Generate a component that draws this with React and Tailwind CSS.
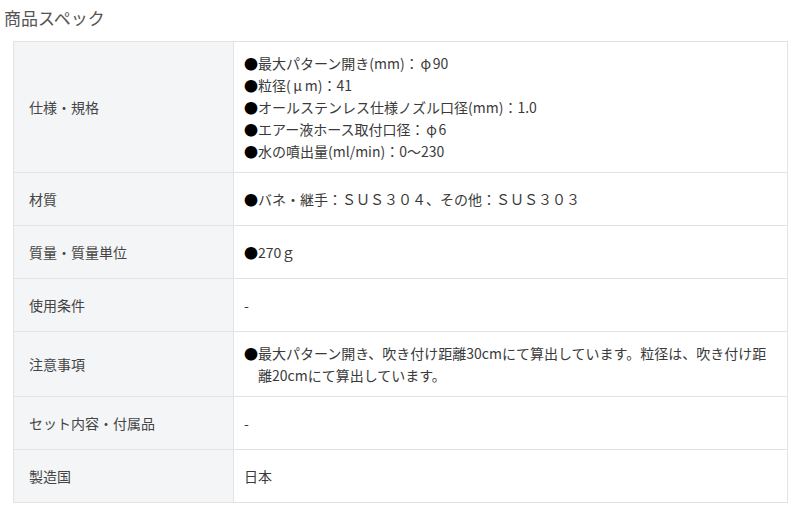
import React from 'react';

const Wide = ({ children }) => (
  <span className="inline-block w-[14px] text-center">{children}</span>
);

const specs = [
  {
    label: '仕様・規格',
    lines: [
      <>最大パターン開き(mm)：<Wide>φ</Wide>90</>,
      <>粒径(<Wide>μ</Wide>m)：41</>,
      'オールステンレス仕様ノズル口径(mm)：1.0',
      <>エアー液ホース取付口径：<Wide>φ</Wide>6</>,
      '水の噴出量(ml/min)：0〜230',
    ],
  },
  { label: '材質', lines: ['バネ・継手：ＳＵＳ３０４、その他：ＳＵＳ３０３'] },
  { label: '質量・質量単位', lines: ['270ｇ'] },
  { label: '使用条件', text: '-' },
  {
    label: '注意事項',
    lines: ['最大パターン開き、吹き付け距離30cmにて算出しています。粒径は、吹き付け距離20cmにて算出しています。'],
  },
  { label: 'セット内容・付属品', text: '-' },
  { label: '製造国', text: '日本' },
];

const App = () => {
  return (
    <div
      className="bg-white w-[790px] h-[505px] overflow-hidden text-[#3a3a3a]"
      style={{ fontFamily: '"Noto Sans CJK JP", "Noto Sans", sans-serif' }}
    >
      <h2 className="pl-[4px] pt-[6px] text-[17px] leading-[24px] text-[#555] font-normal">商品スペック</h2>
      <table className="ml-[13px] mt-[11px] w-[775px] border-collapse table-fixed">
        <tbody>
          {specs.map((row, i) => (
            <tr key={i}>
              <th className="w-[220px] border border-[#e3e3e3] bg-[#f4f5f7] pl-[15px] pr-2 py-[15px] text-left align-middle text-[14px] leading-[22px] font-normal text-[#444]">
                {row.label}
              </th>
              <td className="border border-[#e3e3e3] pl-[10px] pr-[14px] py-[10px] align-middle text-[14px] leading-[22px]">
                {row.lines
                  ? row.lines.map((line, j) => (
                      <div key={j} className="flex">
                        <span className="shrink-0 text-black">●</span>
                        <span>{line}</span>
                      </div>
                    ))
                  : row.text}
              </td>
            </tr>
          ))}
        </tbody>
      </table>
    </div>
  );
};

export default App;
